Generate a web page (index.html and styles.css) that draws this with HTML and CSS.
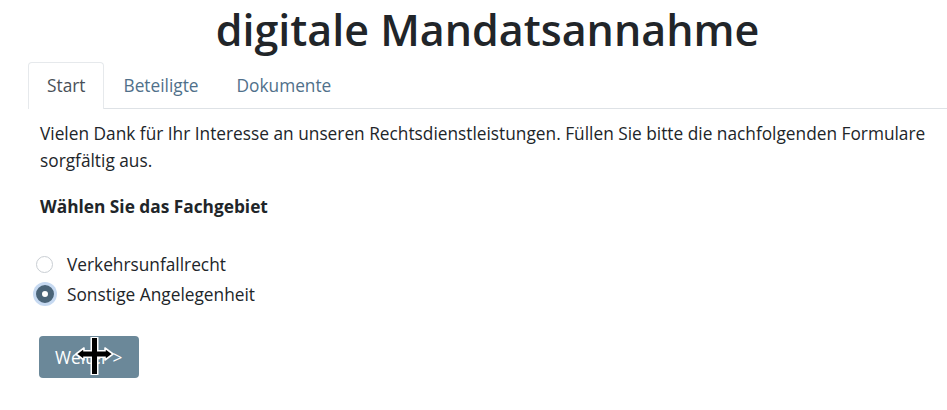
FILE: index.html
```html
<!DOCTYPE html>
<html lang="de">
<head>
<meta charset="utf-8">
<title>digitale Mandatsannahme</title>
<link rel="stylesheet" href="styles.css">
</head>
<body>
<div class="page">
  <h1 class="title">digitale Mandatsannahme</h1>
  <ul class="tabs">
    <li class="tab active">Start</li>
    <li class="tab">Beteiligte</li>
    <li class="tab">Dokumente</li>
  </ul>
  <div class="content">
    <p class="intro">Vielen Dank für Ihr Interesse an unseren Rechtsdienstleistungen. Füllen Sie bitte die nachfolgenden Formulare sorgfältig aus.</p>
    <h2 class="label">Wählen Sie das Fachgebiet</h2>
    <div class="options">
      <label class="option"><span class="radio"></span>Verkehrsunfallrecht</label>
      <label class="option"><span class="radio checked"></span>Sonstige Angelegenheit</label>
    </div>
    <div class="actions">
      <button class="btn" type="button">Weiter &gt;</button>
      <svg class="cursor" width="40" height="40" viewBox="0 0 40 40" aria-hidden="true">
        <path d="M19.5 1 L19.5 39 M5 18 L34 18" stroke="#fff" stroke-width="8" fill="none"/>
        <path d="M1 18 L9 12 L9 24 Z M38 18 L30 12 L30 24 Z" fill="#000" stroke="#fff" stroke-width="1.6" stroke-linejoin="round"/>
        <path d="M19.5 2 L19.5 38 M7 18 L32 18" stroke="#000" stroke-width="5" fill="none"/>
        <path d="M7 18 L32 18" stroke="#000" stroke-width="3.5" fill="none"/>
      </svg>
    </div>
  </div>
</div>
</body>
</html>
```
FILE: styles.css
```css
html, body {
  margin: 0;
  padding: 0;
  background: #fff;
}

body {
  font-family: "Open Sans", "Noto Sans", sans-serif;
  font-size: 17.3px;
  line-height: 27.6px;
  color: #212529;
  overflow: hidden;
}

.page {
  width: 947px;
}

.title {
  margin: 0 0 3px;
  padding-left: 28px;
  text-align: center;
  font-size: 43px;
  line-height: 59px;
  font-weight: 600;
  color: #212529;
}

.tabs {
  list-style: none;
  margin: 0 0 0 28px;
  padding: 0;
  display: flex;
  border-bottom: 1px solid #dee2e6;
}

.tab {
  padding: 9px 18px 8px;
  border: 1px solid transparent;
  border-bottom: none;
  border-radius: 4px 4px 0 0;
  color: #50708a;
  margin-bottom: -1px;
}

.tab.active {
  color: #495057;
  border-color: #e6e9ec;
  background: #fff;
  padding-bottom: 9px;
}

.content {
  padding: 0 10px 0 40px;
}

.intro {
  margin: 11px 0 18px;
}

.label {
  margin: 0;
  font-size: 17.3px;
  font-weight: 700;
  line-height: 27.6px;
}

.options {
  margin-top: 29px;
  display: flex;
  flex-direction: column;
}

.option {
  display: flex;
  align-items: center;
  height: 30px;
  margin-left: -4px;
}

.radio {
  box-sizing: border-box;
  width: 17px;
  height: 17px;
  border-radius: 50%;
  border: 1px solid #c9ced3;
  background: #fff;
  margin-right: 14px;
  flex: none;
}

.radio.checked {
  width: 18px;
  height: 18px;
  margin-left: -0.5px;
  margin-right: 13.5px;
  border: 6px solid #4a6478;
  background: #fff;
  box-shadow: 0 0 0 3px #c6d9f1;
}

.actions {
  position: relative;
  margin-top: 27px;
}

.btn {
  width: 100px;
  height: 42px;
  margin-left: -1px;
  padding: 0 16px;
  text-align: left;
  border: none;
  border-radius: 4px;
  background: #6b8899;
  color: #fff;
  font-family: "Open Sans", "Noto Sans", sans-serif;
  font-size: 17.3px;
}

.cursor {
  position: absolute;
  left: 35px;
  top: 0;
}
```
